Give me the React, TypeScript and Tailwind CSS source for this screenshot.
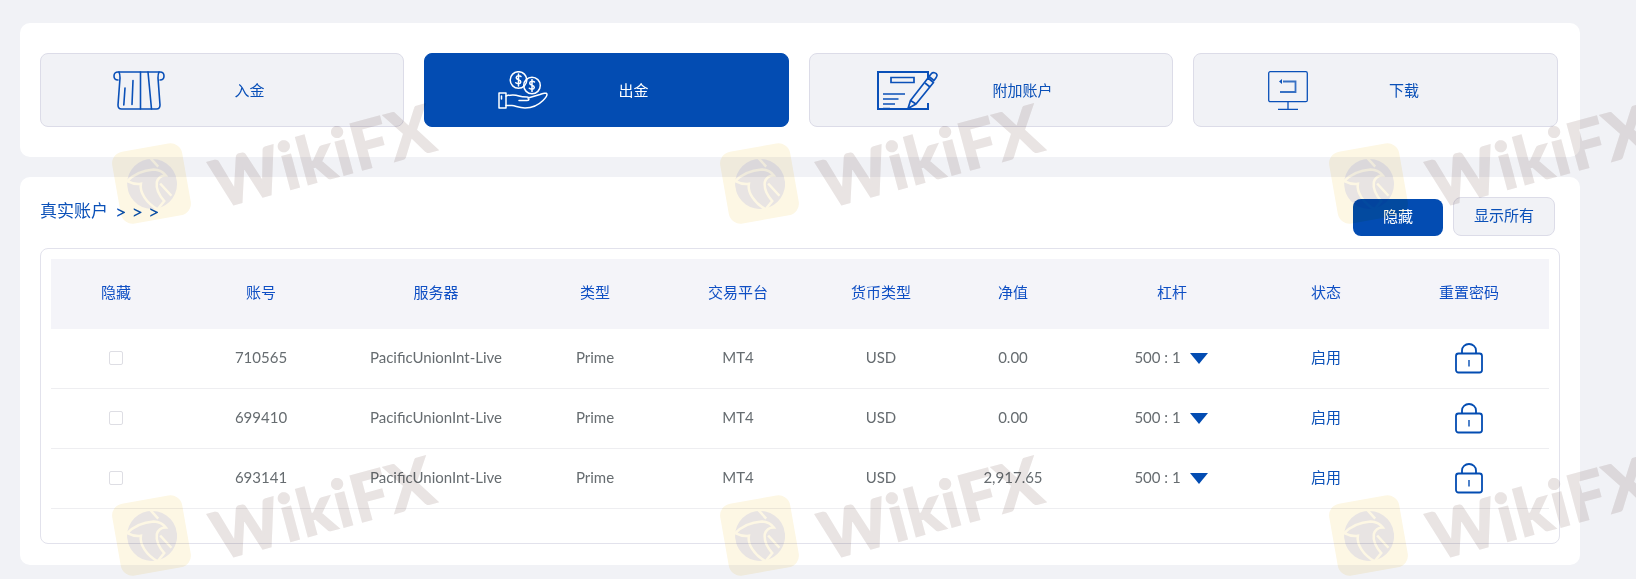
const BLUE = "#034cb2"

const columns = ["隐藏", "账号", "服务器", "类型", "交易平台", "货币类型", "净值", "杠杆", "状态", "重置密码"]

const accounts = [
  { id: "710565", equity: "0.00" },
  { id: "699410", equity: "0.00" },
  { id: "693141", equity: "2,917.65" },
]

const rowGrid = "grid grid-cols-[130px_160px_190px_128px_158px_128px_136px_182px_126px_160px] items-center text-center"

function SlotIcon() {
  return (
    <svg width="52" height="39" viewBox="0 0 52 39" fill="none" stroke="currentColor" strokeWidth="1.6" strokeLinecap="round" strokeLinejoin="round">
      <path d="M5 1h42c2.400 0 4 1.700 4 4s-1.600 4-4 4M5 1C2.600 1 1 2.700 1 5s1.600 4 4 4" />
      <path d="M6 1c1 2 1 3 1 6L5 34c0 2.800 1.400 4 3.500 4h35c2.100 0 3.500-1.200 3.500-4L45 7c0-3 0-4 1-6" />
      <path d="M27.500 1v37M35 1l3.500 37M20 9.500l-1 24M12 17l-1.200 17" />
    </svg>
  )
}

function HandIcon() {
  return (
    <svg width="50" height="39" viewBox="0 0 50 39" fill="none" stroke="currentColor" strokeWidth="1.5" strokeLinecap="round" strokeLinejoin="round">
      <circle cx="20.500" cy="9" r="8.300" />
      <circle cx="34" cy="14.500" r="8.300" />
      <path d="M23 5.500c-1-1-4.500-1.300-4.800 1-.3 2.600 4.800 1.800 4.600 4.500-.2 2.300-3.700 2-5 .8M20.500 3v12M36.500 11c-1-1-4.500-1.300-4.800 1-.3 2.600 4.800 1.800 4.600 4.500-.2 2.300-3.700 2-5 .8M34 8.500v12" />
      <path d="M1 22h7v15H1zM3.500 25v3" />
      <path d="M8 25c5-1.500 9-1.500 13 0 2.500.9 5 1 8 1 2.600 0 2.600 3.500 0 3.500h-8M30 27l12-3.500c2-1 7-2.500 7 0 0 1.500-1.500 3.500-4 6-5 5-11 7.500-18 7.500-6 0-9-2-13-2.500H8" />
    </svg>
  )
}

function FormIcon() {
  return (
    <svg width="62" height="39" viewBox="0 0 62 39" fill="none" stroke="currentColor" strokeWidth="1.7">
      <path d="M51 9V1H1v37h50v-6" strokeWidth="2" />
      <path d="M14 6.500h23v5H14zM6 23h22M6 28h15.500M6 33h12M6 37.500h7" />
      <path d="M31 37.500l2.500-8L51 7l5.500 4.500-17.500 21.500z" strokeLinejoin="round" />
      <path d="M52 5.500l2.500-3c1.200-1.400 5-1 5.500 1.500.3 1.500-1 3-3 5.500zM33.500 29.500l5.500 3.500M48 12l5 4" strokeLinejoin="round" />
    </svg>
  )
}

function ScreenIcon() {
  return (
    <svg width="40" height="39" viewBox="0 0 40 39" fill="none" stroke="currentColor" strokeWidth="1.3">
      <rect x="0.700" y="0.700" width="38.600" height="30" rx="1.500" />
      <path d="M20 31v7M10 38.300h20" />
      <path d="M15 10.500h12.500v10.500H12" strokeWidth="1.800" opacity="0.8" />
      <path d="M14 8v5l-3-2.500z" fill="currentColor" stroke="none" />
    </svg>
  )
}

function LockIcon() {
  return (
    <svg width="28" height="31" viewBox="0 0 28 31" fill="none" stroke={BLUE} strokeWidth="1.800">
      <rect x="1" y="10.500" width="26" height="19" rx="2.500" />
      <path d="M7 10.500V7.500a7 6.500 0 0 1 14 0v3" />
      <path d="M14 17v6.500" strokeWidth="1.400" />
    </svg>
  )
}

// repeated site watermark, sits over the whole page
function Watermark({ x, y }: { x: number; y: number }) {
  return (
    <div className="absolute" style={{ left: x, top: y }}>
      <div className="absolute left-[4px] top-[3px] h-[73px] w-[71px] -rotate-[10deg] rounded-xl bg-[#fdf7e4] mix-blend-multiply">
        <svg className="absolute left-[11px] top-[10px]" width="50" height="54" viewBox="0 0 50 54" fill="none">
          <circle cx="25" cy="27" r="25" fill="#e8e4e3" />
          <path d="M1 20c8-6 18-8 28-7 5 1 9 4 11 8-5-1-8 1-10 5-2 6-1 12 4 20l-8 7c-10-8-15-20-12-28-4 0-9-2-13-5zM27 0l7 11M42 42l-9-14" stroke="#fdf7e4" strokeWidth="2.500" />
        </svg>
      </div>
      <div className="absolute left-[101px] top-[8px] origin-left -rotate-[15deg] whitespace-nowrap font-['Lato',sans-serif] text-[65px] font-bold leading-none tracking-[2px] text-[#e9e4e3] mix-blend-multiply [-webkit-text-stroke:2px_#e9e4e3]">
        WikiFX
      </div>
    </div>
  )
}

const navItems = [
  { label: "入金", icon: <SlotIcon />, active: false, iconBox: "w-[196px]", labelBox: "ml-[0.5px]" },
  { label: "出金", icon: <HandIcon />, active: true, iconBox: "w-[196px]", labelBox: "ml-[0.5px]" },
  { label: "附加账户", icon: <FormIcon />, active: false, iconBox: "w-[196px]", labelBox: "ml-[4.5px]" },
  { label: "下载", icon: <ScreenIcon />, active: false, iconBox: "w-[188px]", labelBox: "ml-[10px]" },
]

export default function App() {
  return (
    <div className="relative h-[579px] w-[1636px] overflow-hidden bg-[#f1f2f6] pl-5 pt-[23px] font-['Lato','Noto_Sans_CJK_SC',sans-serif] text-[15px]">
      <div className="w-[1560px]">
        {/* Action buttons */}
        <div className="grid h-[134px] grid-cols-[364px_365px_364px_365px] items-center gap-5 rounded-[10px] bg-white pl-5">
          {navItems.map((item) => (
            <button
              key={item.label}
              className={`flex h-[74px] items-center rounded-lg border ${
                item.active ? "border-[#034cb2] bg-[#034cb2] text-white" : "border-[#dcdce8] bg-[#f1f2f6] text-[#0a50b8]"
              }`}
            >
              <div className={`flex justify-center ${item.iconBox}`}>{item.icon}</div>
              <div className={`flex w-6 justify-center whitespace-nowrap ${item.labelBox}`}>{item.label}</div>
            </button>
          ))}
        </div>

        {/* Accounts */}
        <div className="mt-5 h-[388px] rounded-[10px] bg-white pl-5 pr-5">
          <div className="flex h-[71px] items-start justify-between pr-[5px]">
            <div className="mt-[23px] flex items-center text-[17px] leading-[22px] text-[#0a50b8]">
              真实账户
              <div className="ml-[7px] flex">
                <span className="w-[16.500px] text-[20px]">&gt;</span>
                <span className="w-[16.500px] text-[20px]">&gt;</span>
                <span className="w-[16.500px] text-[20px]">&gt;</span>
              </div>
            </div>
            <div className="mt-5 flex items-end gap-2.5">
              <button className="h-[37px] w-[90px] rounded-lg bg-[#034cb2] pb-[2px] text-white">隐藏</button>
              <button className="h-[39px] w-[102px] rounded-lg border border-[#dcdce8] bg-[#f1f2f6] pb-[2px] text-[#0a50b8]">显示所有</button>
            </div>
          </div>

          <div className="h-[296px] w-[1520px] rounded-lg border border-[#e2e2ec] px-2.5 pt-2.5">
            <div className={`${rowGrid} h-[70px] bg-[#f4f4f9] pb-[3px] text-[#0f4fc4]`}>
              {columns.map((name) => (
                <div key={name}>{name}</div>
              ))}
            </div>
            {accounts.map((account) => (
              <div key={account.id} className={`${rowGrid} h-[60px] border-b border-[#eeeef1] pb-[2px] text-[#666c70]`}>
                <div className="flex justify-center">
                  <div className="size-[14px] rounded-[2px] border border-[#dedee4] bg-white" />
                </div>
                <div>{account.id}</div>
                <div>PacificUnionInt-Live</div>
                <div>Prime</div>
                <div>MT4</div>
                <div>USD</div>
                <div>{account.equity}</div>
                <div className="flex items-center justify-center gap-[9px] pr-[2px]">
                  500 : 1
                  <svg width="18" height="11" viewBox="0 0 18 11" className="mt-[2px]">
                    <path d="M0 0h18L9 11z" fill={BLUE} />
                  </svg>
                </div>
                <div className="text-[#0a50b8]">启用</div>
                <div className="mt-[2px] flex justify-center">
                  <LockIcon />
                </div>
              </div>
            ))}
          </div>
        </div>
      </div>

      <div className="pointer-events-none absolute inset-0">
        {[112, 720, 1329].flatMap((x) =>
          [144, 496].map((y) => <Watermark key={`${x}-${y}`} x={x} y={y} />)
        )}
      </div>
    </div>
  )
}
